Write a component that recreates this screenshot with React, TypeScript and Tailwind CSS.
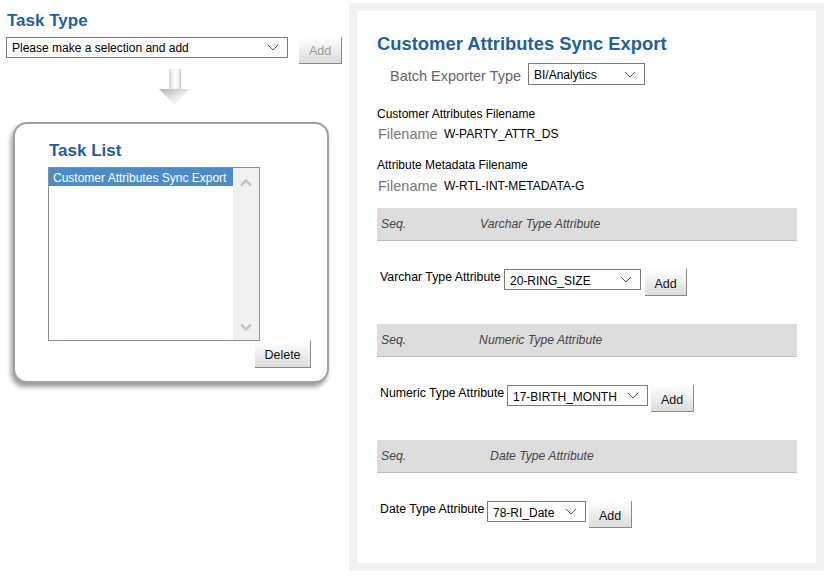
const ARIAL = "font-['Liberation_Sans',Arial,sans-serif]";

type SelectProps = {
  value: string;
  className: string;
};

const FakeSelect = ({ value, className }: SelectProps) => (
  <div
    className={`flex items-center justify-between border border-[#7a7a7a] bg-white pl-[5px] pr-[8px] text-[12px] text-black ${className}`}
  >
    <span>{value}</span>
    <svg width="12" height="7" viewBox="0 0 12 7" fill="none">
      <path d="M1 1l5 5 5-5" stroke="#555" strokeWidth="1" />
    </svg>
  </div>
);

const GreyButton = ({
  label,
  className,
  disabled
}: {
  label: string;
  className: string;
  disabled?: boolean;
}) => (
  <button
    className={`h-[27px] border-r border-b border-[#8a8a8a] bg-gradient-to-b from-white to-[#dcdcdc] text-[12.5px] ${
      disabled ? "text-[#999]" : "text-[#111]"
    } ${className}`}
  >
    {label}
  </button>
);

const SeqHeader = ({ title, className }: { title: string; className: string }) => (
  <div className="flex h-[33px] items-center border-b border-[#bdbdbd] bg-[#dcdcdc] pl-[4px] pt-[1px] text-[12.2px] text-[#444] italic">
    <span>Seq.</span>
    <span className={className}>{title}</span>
  </div>
);

const AttributeRow = ({
  label,
  value,
  labelClass,
  selectClass,
  buttonClass
}: {
  label: string;
  value: string;
  labelClass: string;
  selectClass: string;
  buttonClass: string;
}) => (
  <div className="flex items-start pl-[3px]">
    <span className={`pt-[1px] text-[12.3px] leading-[14px] whitespace-nowrap text-black ${labelClass}`}>{label}</span>
    <FakeSelect value={value} className={`h-[21px] [&>span]:pt-[2px] ${selectClass}`} />
    <GreyButton label="Add" className={`pt-[4px] ${buttonClass}`} />
  </div>
);

const DownArrow = () => (
  <svg width="33" height="37" viewBox="0 0 33 37" className="ml-[158px] mt-[5px] block">
    <defs>
      <linearGradient id="shaft" x1="0" y1="0" x2="1" y2="0">
        <stop offset="0" stopColor="#d4d4d4" />
        <stop offset="0.45" stopColor="#ffffff" />
        <stop offset="0.8" stopColor="#f2f2f2" />
        <stop offset="1" stopColor="#bdbdbd" />
      </linearGradient>
      <linearGradient id="head" x1="0" y1="0" x2="1" y2="1">
        <stop offset="0" stopColor="#b0b0b0" />
        <stop offset="0.55" stopColor="#ececec" />
        <stop offset="1" stopColor="#f8f8f8" />
      </linearGradient>
    </defs>
    <rect x="11" y="0" width="12" height="20" fill="url(#shaft)" />
    <path d="M1 20h31L16.5 36z" fill="url(#head)" />
  </svg>
);

const TaskPanel = () => (
  <div className="ml-[13px] mt-[16px] h-[261px] w-[316px] rounded-[14px] border-2 border-[#a0a0a0] bg-white pl-[34px] pt-[17px] shadow-[-2px_4px_5px_rgba(0,0,0,0.4)]">
    <h2 className="text-[17px] leading-[20px] font-bold text-[#1f5fa5]">Task List</h2>
    <div className="-ml-[1px] mt-[6px] flex h-[174px] w-[212px] border border-[#8a8d99] bg-white">
      <div className="flex-1">
        <div className="h-[18px] bg-[#4a8bcb] pl-[4px] text-[12px] leading-[20px] whitespace-nowrap text-white">
          Customer Attributes Sync Export
        </div>
      </div>
      <div className="flex w-[26px] flex-col items-center justify-between bg-[#f0f1f2] pt-[10px] pb-[8px]">
        <svg width="12" height="9" viewBox="0 0 12 9" fill="none">
          <path d="M1 7.5l5-5 5 5" stroke="#c4c4c4" strokeWidth="2.5" />
        </svg>
        <svg width="12" height="9" viewBox="0 0 12 9" fill="none">
          <path d="M1 1.5l5 5 5-5" stroke="#c4c4c4" strokeWidth="2.5" />
        </svg>
      </div>
    </div>
    <div className="flex w-[262px] justify-end">
      <GreyButton label="Delete" className="w-[56px] pt-[2px]" />
    </div>
  </div>
);

const App = () => {
  return (
    <div className={`flex h-[577px] w-[831px] overflow-hidden bg-white ${ARIAL}`}>
      <div className="w-[349px] shrink-0">
        <h1 className="ml-[7px] mt-[11px] text-[17px] leading-[20px] font-bold text-[#1f5fa5]">Task Type</h1>
        <div className="ml-[6px] mt-[6px] flex items-start">
          <FakeSelect value="Please make a selection and add" className="h-[21px] w-[282px]" />
          <GreyButton label="Add" disabled className="ml-[11px] w-[43px] pt-[2px]" />
        </div>
        <DownArrow />
        <TaskPanel />
      </div>

      <div className="mt-[3px] h-[568px] w-[475px] shrink-0 border-8 border-[#f0f1f2] bg-white pl-[20px] pr-[19px]">
        <h1 className="mt-[22px] mb-[1px] text-[18.4px] leading-[22px] font-bold whitespace-nowrap text-[#1f5fa5]">
          Customer Attributes Sync Export
        </h1>
        <div className="mt-[8px] flex items-start pl-[13px]">
          <span className="w-[138px] pt-[4px] text-[14.5px] leading-[18px] whitespace-nowrap text-[#666]">
            Batch Exporter Type
          </span>
          <FakeSelect value="BI/Analytics" className="h-[22px] w-[117px] [&>span]:pt-[1px]" />
        </div>

        <p className="mt-[21px] text-[12px] leading-[16px] text-black">Customer Attributes Filename</p>
        <div className="mt-[3px] flex h-[20px] items-center pl-[1px]">
          <span className="w-[66px] text-[14.5px] text-[#777]">Filename</span>
          <span className="pb-[2px] text-[12px] text-black">W-PARTY_ATTR_DS</span>
        </div>
        <p className="mt-[12px] text-[12px] leading-[16px] text-black">Attribute Metadata Filename</p>
        <div className="mt-[4px] flex h-[20px] items-center pl-[1px]">
          <span className="w-[66px] text-[14.5px] text-[#777]">Filename</span>
          <span className="pb-[2px] text-[12px] text-black">W-RTL-INT-METADATA-G</span>
        </div>

        <div className="mt-[11px]">
          <SeqHeader title="Varchar Type Attribute" className="ml-[74px]" />
        </div>
        <div className="mt-[28px]">
          <AttributeRow
            label="Varchar Type Attribute"
            value="20-RING_SIZE"
            labelClass="w-[124px]"
            selectClass="w-[137px]"
            buttonClass="ml-[4px] w-[42px]"
          />
        </div>
        <div className="mt-[28px]">
          <SeqHeader title="Numeric Type Attribute" className="ml-[73px]" />
        </div>
        <div className="mt-[28px]">
          <AttributeRow
            label="Numeric Type Attribute"
            value="17-BIRTH_MONTH"
            labelClass="w-[127px]"
            selectClass="w-[141px]"
            buttonClass="ml-[3px] w-[43px]"
          />
        </div>
        <div className="mt-[28px]">
          <SeqHeader title="Date Type Attribute" className="ml-[84px]" />
        </div>
        <div className="mt-[28px]">
          <AttributeRow
            label="Date Type Attribute"
            value="78-RI_Date"
            labelClass="w-[107px]"
            selectClass="w-[99px]"
            buttonClass="ml-[3px] w-[43px]"
          />
        </div>
      </div>
    </div>
  );
};

export default App;
